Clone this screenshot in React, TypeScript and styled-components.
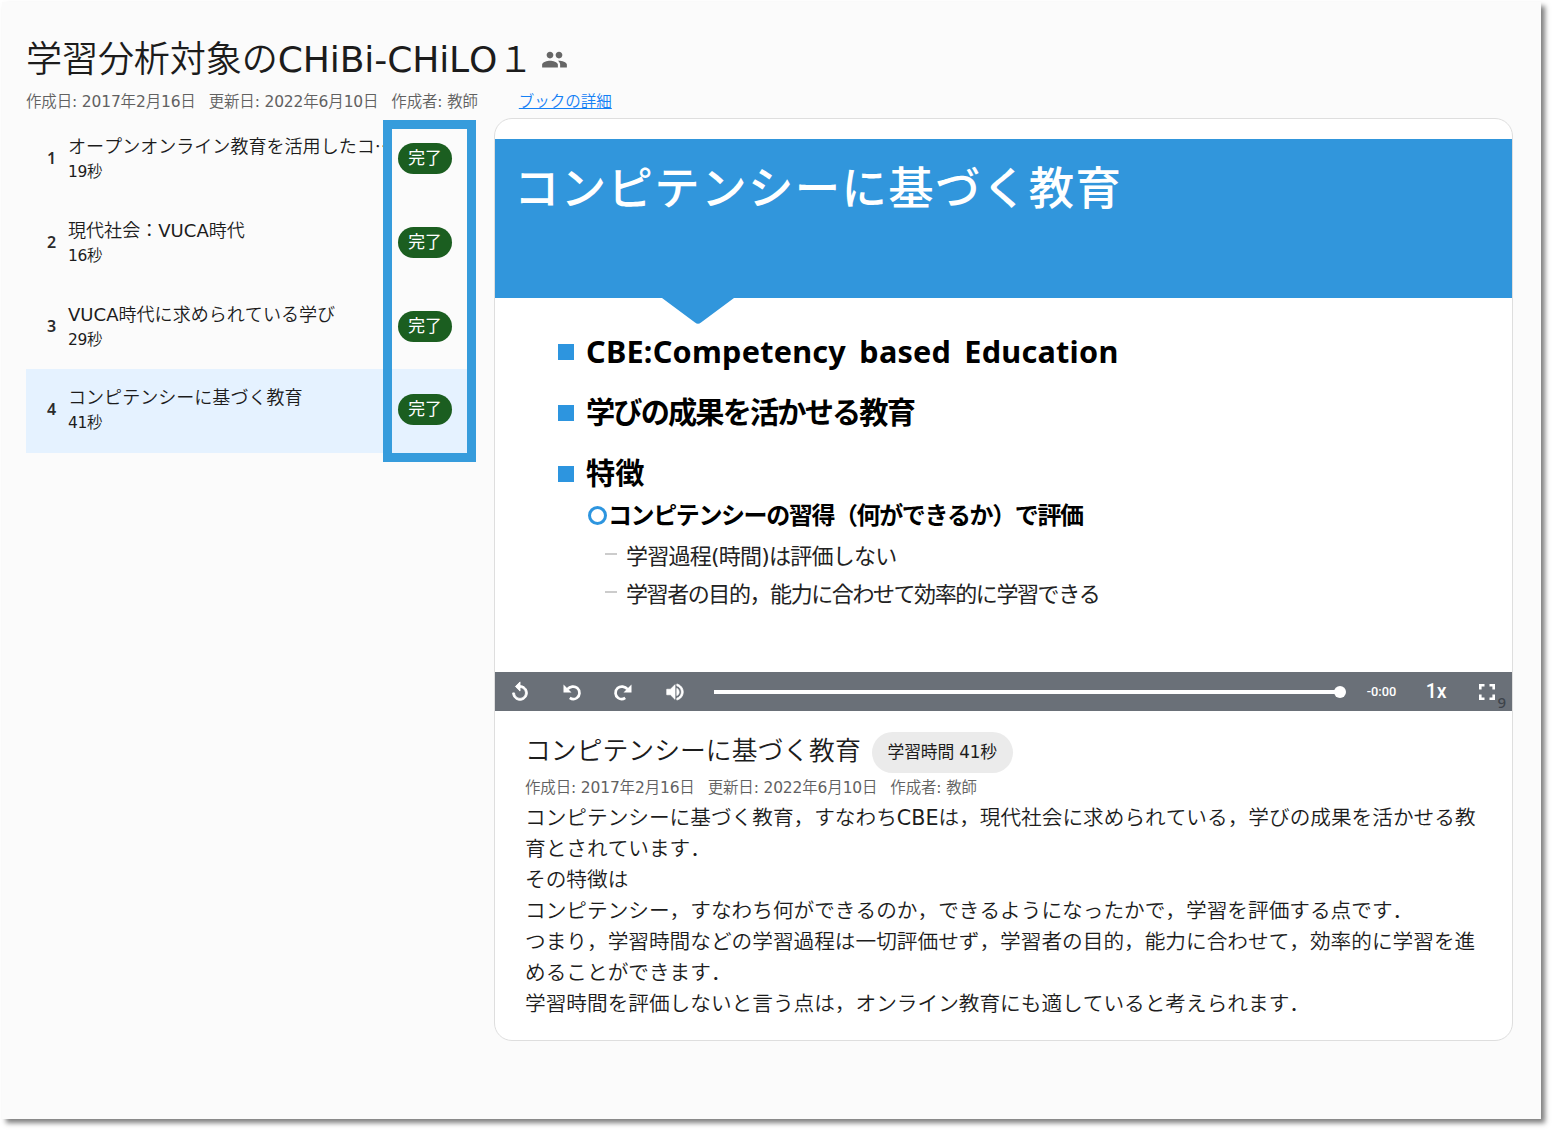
import React from "react";
import styled, { createGlobalStyle } from "styled-components";
import { MdPeople, MdReplay, MdVolumeUp } from "react-icons/md";

const Global = createGlobalStyle`
  * { box-sizing: border-box; }
  body {
    margin: 0;
    background: #fff;
    color: #1c1c1c;
    font-family: "DejaVu Sans", "Noto Sans CJK JP", sans-serif;
    font-weight: 350;
    font-kerning: none;
    text-spacing-trim: space-all;
  }
  h1, h2, p { margin: 0; font-weight: 350; }
`;

const Latin = styled.span`
  font-weight: 400;
`;

const Page = styled.div`
  width: 1554px;
  height: 1132px;
  padding: 2px 0 0 2px;
  overflow: hidden;
`;

const Sheet = styled.main`
  width: 1539px;
  height: 1117px;
  padding: 33px 27px 0 24px;
  background: #fbfbfb;
  box-shadow: 4px 4px 5px rgba(0, 0, 0, 0.5);
`;

const TitleRow = styled.header`
  display: flex;
  align-items: center;
  gap: 8px;
  height: 50px;
`;

const Title = styled.h1`
  font-size: 36.1px;
  line-height: 50px;
  letter-spacing: -0.12px;
  white-space: nowrap;
`;

const PeopleIcon = styled(MdPeople)`
  width: 27px;
  height: 27px;
  margin-bottom: 2px;
  color: #666;
`;

const MetaRow = styled.div`
  display: flex;
  align-items: center;
  height: 33px;
`;

const Meta = styled.div`
  display: flex;
  gap: 13px;
  font-size: 15.48px;
  line-height: 24px;
  letter-spacing: -0.15px;
  color: #616161;
  white-space: nowrap;
`;

const DetailLink = styled.a`
  margin-left: 41px;
  font-size: 15.5px;
  line-height: 24px;
  color: #1480f5;
  text-decoration: underline;
`;

const Columns = styled.div`
  display: grid;
  grid-template-columns: 441px 1019px;
  gap: 27px;
  align-items: start;
`;

const TopicList = styled.ol`
  position: relative;
  margin: 0;
  padding: 0;
  list-style: none;
`;

const TopicRow = styled.li<{ $active?: boolean }>`
  display: flex;
  align-items: flex-start;
  height: 83.8px;
  padding: 15px 15px 0 21px;
  background: ${(p) => (p.$active ? "#e5f2ff" : "transparent")};
`;

const TopicNumber = styled.span`
  width: 21px;
  padding-top: 13px;
  color: #2b2b2b;
  font-family: "Noto Sans", sans-serif;
  font-size: 16px;
  font-weight: 600;
  line-height: 24px;
`;

const TopicText = styled.div`
  flex: 1;
  min-width: 0;
`;

const TopicName = styled.div`
  font-size: 18.06px;
  line-height: 27px;
  white-space: nowrap;
`;

const TopicTime = styled.div`
  font-size: 15.48px;
  line-height: 24px;
  letter-spacing: -0.3px;
`;

const DoneChip = styled.span`
  width: 54px;
  height: 31px;
  margin-top: 10px;
  border-radius: 16px;
  background: #1b5e20;
  color: #fff;
  font-size: 16.8px;
  font-weight: 400;
  line-height: 30px;
  text-align: center;
`;

const Highlight = styled.div`
  position: absolute;
  top: 2px;
  left: 357px;
  width: 93px;
  height: 342px;
  border: 9px solid #369cdc;
`;

const Card = styled.article`
  height: 923px;
  padding-top: 20px;
  border: 1px solid #dedede;
  border-radius: 18px;
  background: #fff;
`;

const Slide = styled.section`
  display: flex;
  flex-direction: column;
  height: 533px;
`;

const SlideHeader = styled.div`
  height: 159px;
  padding: 17px 0 0 19px;
  background: #3196dc;
  color: #fff;
  font-size: 45.4px;
  font-weight: 500;
  line-height: 68px;
  letter-spacing: 1.4px;
  white-space: nowrap;
`;

const Notch = styled.svg`
  display: block;
  width: 72px;
  height: 26px;
  margin: 0 0 -3px 167px;
  fill: #3196dc;
`;

const Bullet = styled.div<{ $spacing: number; $latin?: boolean }>`
  display: flex;
  align-items: center;
  gap: 12px;
  height: 61px;
  padding-left: 63px;
  color: #000;
  font-family: "Noto Sans", "Noto Sans CJK JP", sans-serif;
  font-size: ${(p) => (p.$latin ? 30.6 : 29.2)}px;
  font-weight: 700;
  line-height: 40px;
  letter-spacing: ${(p) => p.$spacing}px;
  word-spacing: 5px;
  white-space: nowrap;

  &::before {
    content: "";
    width: 16px;
    height: 16px;
    background: #2d95df;
  }

  span {
    padding-bottom: ${(p) => (p.$latin ? 1 : 2)}px;
  }
`;

const SubBullet = styled.div`
  display: flex;
  align-items: center;
  gap: 1px;
  height: 22px;
  margin-bottom: 9px;
  padding-left: 93px;
  color: #000;
  font-size: 24px;
  font-weight: 700;
  letter-spacing: -1.4px;
  white-space: nowrap;

  &::before {
    content: "";
    width: 13px;
    height: 13px;
    border: 3px solid #2d95df;
    border-radius: 50%;
  }

  span {
    padding-bottom: 4px;
  }
`;

const Dash = styled.div<{ $spacing: number }>`
  display: flex;
  align-items: center;
  gap: 9px;
  height: 38px;
  padding-left: 110px;
  color: #222;
  font-size: 22px;
  font-weight: 400;
  letter-spacing: ${(p) => p.$spacing}px;
  white-space: nowrap;

  &::before {
    content: "";
    width: 12px;
    height: 1.5px;
    background: #ccc;
  }
`;

const Controls = styled.div`
  position: relative;
  display: flex;
  align-items: center;
  height: 39px;
  padding: 0 15px 0 14px;
  background: #6a7078;
  color: #fff;
  font-family: Roboto, sans-serif;
`;

const ControlIcon = styled.span<{ $stroke: number }>`
  display: flex;
  flex: none;
  width: 51.7px;

  svg {
    width: 22px;
    height: 22px;
    stroke: currentColor;
    stroke-width: ${(p) => p.$stroke};
  }

  path[fill="none"] {
    stroke: none;
  }
`;

const Track = styled.div`
  display: flex;
  flex: none;
  align-items: center;
  justify-content: flex-end;
  width: 626px;
  height: 4px;
  margin-left: -2px;
  margin-top: 1px;
  background: #fff;

  &::after {
    content: "";
    flex: none;
    width: 12px;
    height: 12px;
    margin-right: -6px;
    border-radius: 50%;
    background: #fff;
  }
`;

const Remaining = styled.span`
  width: 59px;
  margin-left: 27px;
  font-size: 12.8px;
  font-weight: 500;
`;

const Rate = styled.span`
  width: 53px;
  font-size: 19.5px;
  font-weight: 500;
`;

const SlideNumber = styled.span`
  position: absolute;
  right: 6px;
  bottom: 1px;
  color: #3d434a;
  font-family: "Noto Sans", sans-serif;
  font-size: 15px;
  font-weight: 500;
  line-height: 16px;
`;

const Details = styled.section`
  padding: 21px 29px 0 30px;
`;

const Heading = styled.div`
  display: flex;
  align-items: center;
  gap: 11px;
  height: 41px;
  margin-bottom: 3px;
`;

const HeadingText = styled.h2`
  padding-bottom: 3px;
  font-size: 25.84px;
  line-height: 38px;
`;

const TimeChip = styled.span`
  width: 141px;
  height: 41px;
  border-radius: 21px;
  background: #ebebeb;
  font-size: 16.8px;
  font-weight: 400;
  line-height: 40px;
  text-align: center;
  letter-spacing: -0.15px;
`;

const Description = styled.p`
  margin-top: 3px;
  font-size: 20.66px;
  line-height: 31px;
`;

const topics = [
  { name: "オープンオンライン教育を活用したコ⋯", time: "19秒" },
  { name: "現代社会：VUCA時代", time: "16秒" },
  { name: "VUCA時代に求められている学び", time: "29秒" },
  { name: "コンピテンシーに基づく教育", time: "41秒" },
];

const description = [
  "コンピテンシーに基づく教育，すなわちCBEは，現代社会に求められている，学びの成果を活かせる教育とされています．",
  "その特徴は",
  "コンピテンシー，すなわち何ができるのか，できるようになったかで，学習を評価する点です．",
  "つまり，学習時間などの学習過程は一切評価せず，学習者の目的，能力に合わせて，効率的に学習を進めることができます．",
  "学習時間を評価しないと言う点は，オンライン教育にも適していると考えられます．",
];

/* Gives Latin letters and digits a slightly heavier weight than the kana and kanji. */
function Mixed({ text }: { text: string }) {
  return (
    <>
      {text
        .split(/([A-Za-z0-9:-]+)/)
        .map((part, i) => (i % 2 ? <Latin key={i}>{part}</Latin> : part))}
    </>
  );
}

function Dates() {
  return (
    <Meta>
      {["作成日: 2017年2月16日", "更新日: 2022年6月10日", "作成者: 教師"].map((t) => (
        <span key={t}>
          <Mixed text={t} />
        </span>
      ))}
    </Meta>
  );
}

function TurnIcon({ flip }: { flip?: boolean }) {
  return (
    <svg viewBox="0 0 22 22" fill="none">
      <g transform={flip ? "translate(22 0) scale(-1 1)" : undefined}>
        <path d="M6.5 8.2C9 5.2 13.5 4.6 16.3 7.1C19.5 10 19 14.8 15.8 17C13.5 18.6 10.8 18.3 8.8 16.9" />
        <path d="M2.5 3.5V11.5H10.5Z" fill="currentColor" stroke="none" />
      </g>
    </svg>
  );
}

export default function App() {
  return (
    <Page>
      <Global />
      <Sheet>
        <TitleRow>
          <Title>
            <Mixed text="学習分析対象のCHiBi-CHiLO１" />
          </Title>
          <PeopleIcon />
        </TitleRow>
        <MetaRow>
          <Dates />
          <DetailLink>ブックの詳細</DetailLink>
        </MetaRow>
        <Columns>
          <TopicList>
            {topics.map((t, i) => (
              <TopicRow key={t.name} $active={i === 3}>
                <TopicNumber>{i + 1}</TopicNumber>
                <TopicText>
                  <TopicName>
                    <Mixed text={t.name} />
                  </TopicName>
                  <TopicTime>
                    <Mixed text={t.time} />
                  </TopicTime>
                </TopicText>
                <DoneChip>完了</DoneChip>
              </TopicRow>
            ))}
            <Highlight />
          </TopicList>
          <Card>
            <Slide>
              <SlideHeader>コンピテンシーに基づく教育</SlideHeader>
              <Notch viewBox="0 0 72 26">
                <path d="M0 0H72L39 24.5Q36 27 33 24.5Z" />
              </Notch>
              <Bullet $spacing={0.25} $latin><span>CBE:Competency based Education</span></Bullet>
              <Bullet $spacing={-1.85}><span>学びの成果を活かせる教育</span></Bullet>
              <Bullet $spacing={0}><span>特徴</span></Bullet>
              <SubBullet><span>コンピテンシーの習得（何ができるか）で評価</span></SubBullet>
              <Dash $spacing={-0.77}>学習過程(時間)は評価しない</Dash>
              <Dash $spacing={-1.42}>学習者の目的，能力に合わせて効率的に学習できる</Dash>
            </Slide>
            <Controls>
              <ControlIcon $stroke={1}><MdReplay /></ControlIcon>
              <ControlIcon $stroke={2.7}><TurnIcon /></ControlIcon>
              <ControlIcon $stroke={2.7}><TurnIcon flip /></ControlIcon>
              <ControlIcon $stroke={0.8}><MdVolumeUp /></ControlIcon>
              <Track />
              <Remaining>-0:00</Remaining>
              <Rate>1x</Rate>
              <svg width="16" height="16" viewBox="0 0 16 16" fill="none" stroke="#fff" strokeWidth="2.6">
                <path d="M1.3 5.5V1.3H5.5M10.5 1.3H14.7V5.5M14.7 10.5V14.7H10.5M5.5 14.7H1.3V10.5" />
              </svg>
              <SlideNumber>9</SlideNumber>
            </Controls>
            <Details>
              <Heading>
                <HeadingText>コンピテンシーに基づく教育</HeadingText>
                <TimeChip>学習時間 41秒</TimeChip>
              </Heading>
              <Dates />
              <Description>
                {description.map((line) => (
                  <React.Fragment key={line}>
                    <Mixed text={line} />
                    <br />
                  </React.Fragment>
                ))}
              </Description>
            </Details>
          </Card>
        </Columns>
      </Sheet>
    </Page>
  );
}
